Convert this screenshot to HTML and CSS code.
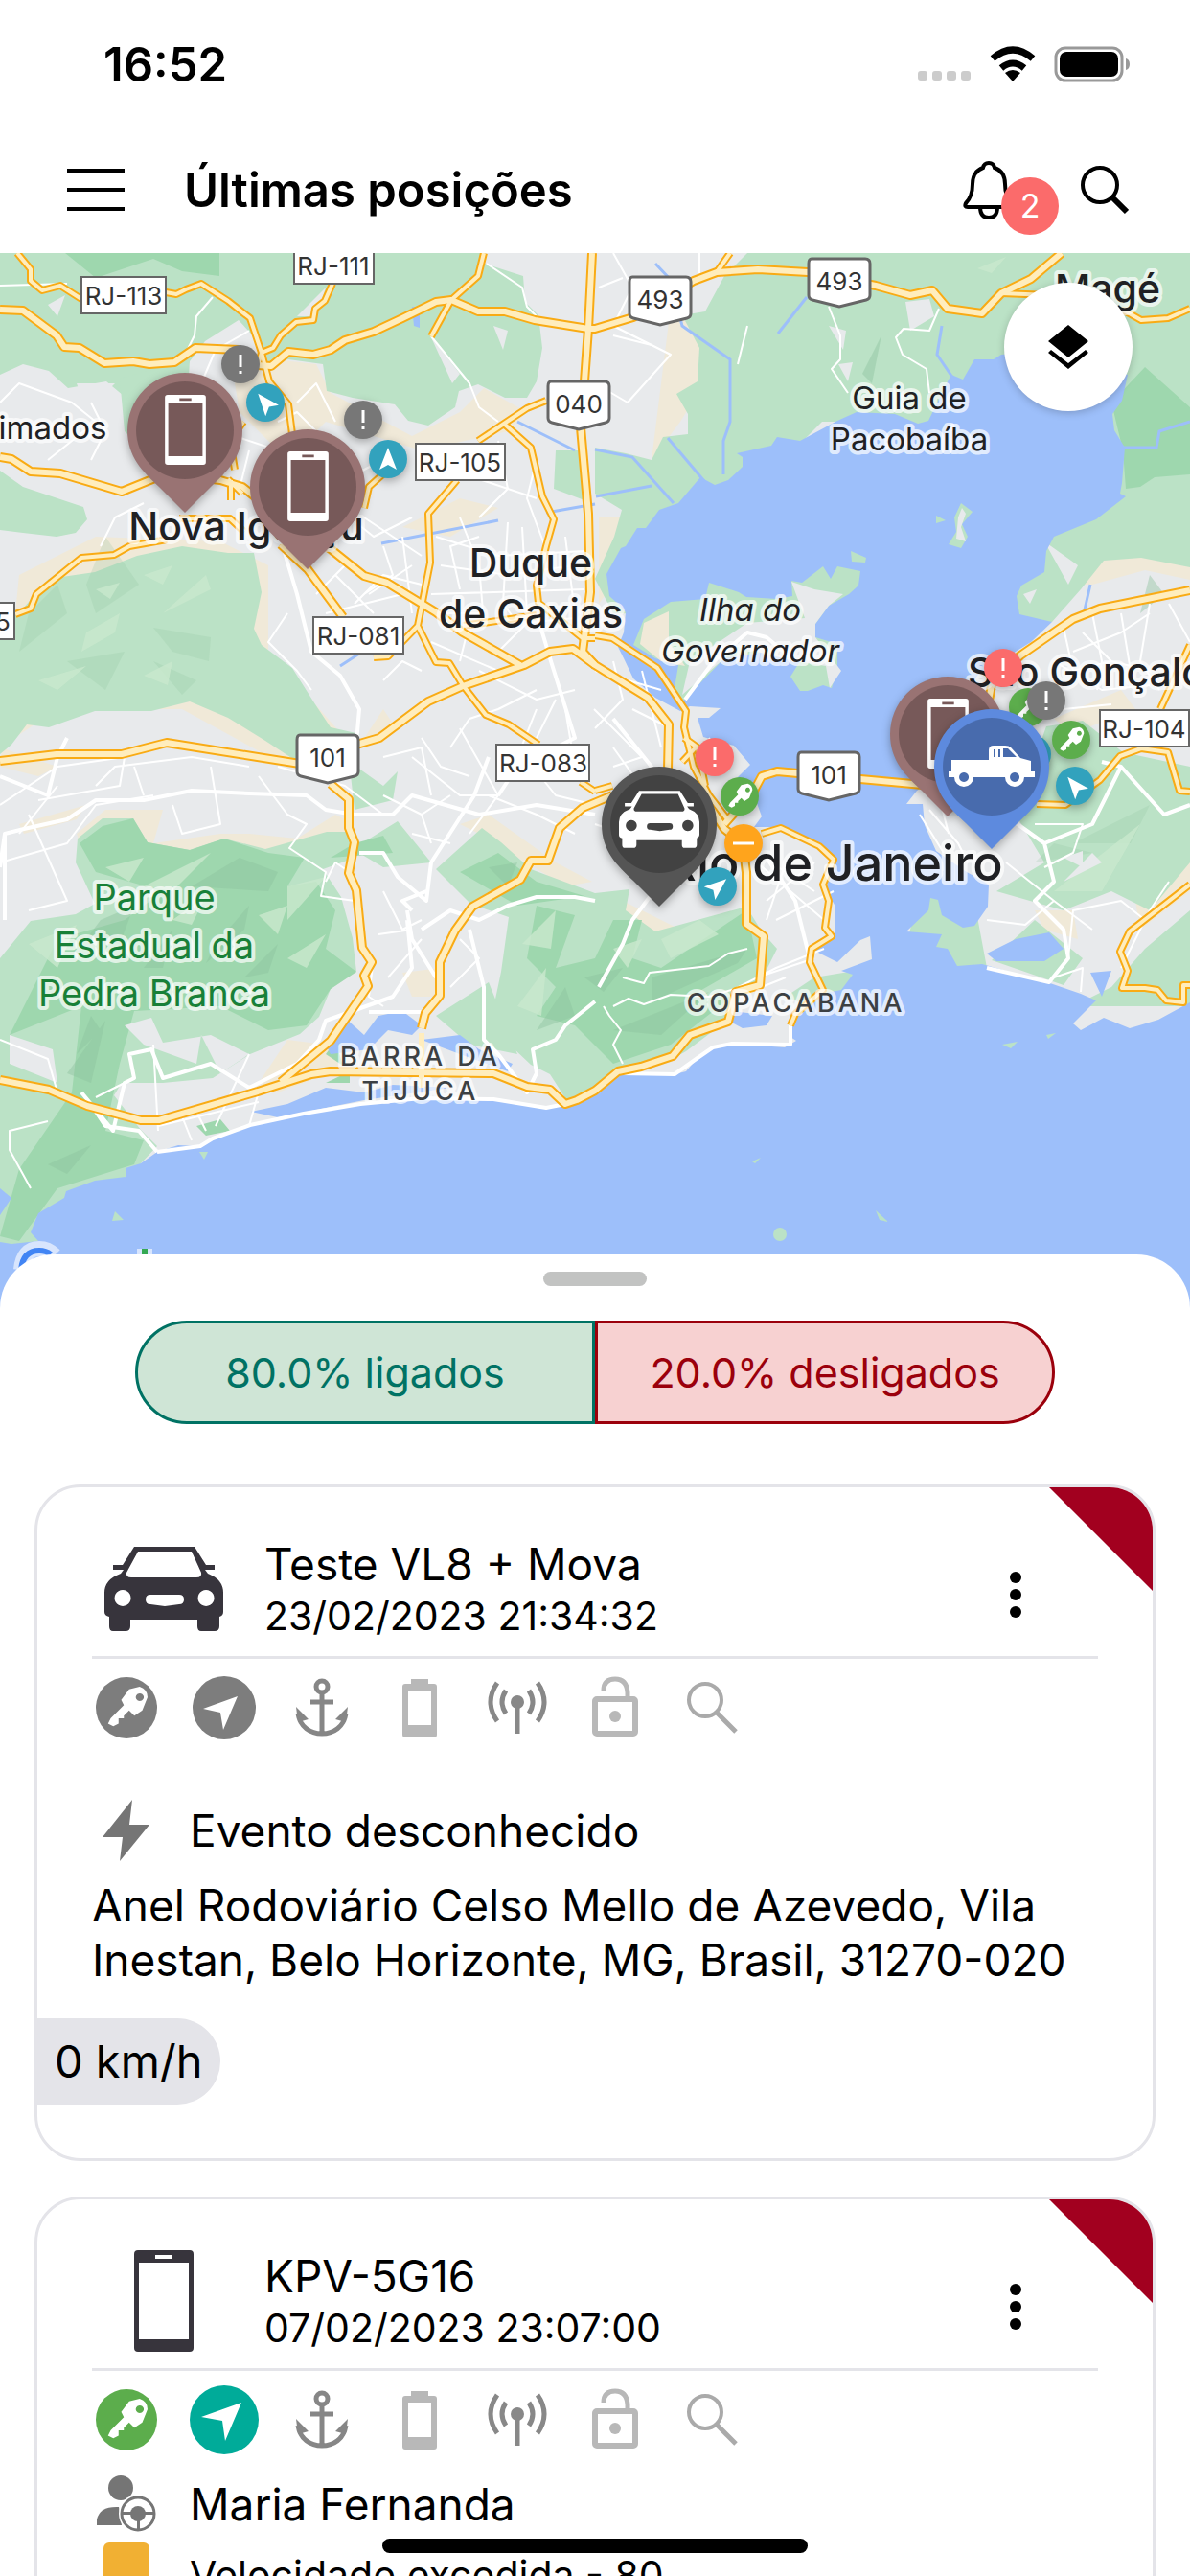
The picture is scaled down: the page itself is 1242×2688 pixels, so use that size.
FILE: index.html
```
<!DOCTYPE html>
<html lang="pt-BR">
<head>
    <meta charset="UTF-8">
    <meta name="viewport" content="width=device-width, initial-scale=1.0">
    <title>Últimas posições</title>
    <link rel="stylesheet" href="styles.css">
</head>
<body>
    <!-- Shared icons -->
    <svg class="sprite" aria-hidden="true">
        <symbol id="car" viewBox="0 0 124 88">
            <path fill="currentColor" fill-rule="evenodd" d="M31 0H94L106 19H115V24H105L108 28Q124 34 124 48V68Q124 72 120 73V83Q120 88 115 88H101Q97 88 97 83V76H27V83Q27 88 22 88H9Q5 88 5 83V73Q0 72 0 68V48Q0 34 17 28L20 24H9V19H19ZM35 5L23 27Q22 32 28 32H96Q102 32 101 27L91 5ZM19 45a8.500 8.500 0 1 0 .1 0ZM106 45a8.500 8.500 0 1 0 .1 0ZM48 50H78Q83 50 83 55 83 60 78 60L63 62 48 60Q43 60 43 55 43 50 48 50Z"/>
        </symbol>
        <symbol id="phone" viewBox="0 0 62 106">
            <path fill="currentColor" fill-rule="evenodd" d="M4 0H58Q62 0 62 4V102Q62 106 58 106H4Q0 106 0 102V4Q0 0 4 0ZM5 13V93H57V13ZM22 5V9H40V5Z"/>
        </symbol>
        <symbol id="truck" viewBox="-45 -22 90 44">
            <path fill="currentColor" fill-rule="evenodd" d="M-42-7H-3V-17Q-3-22 2-22H14Q18-22 20-20L30-9 41-6V5H45V11H34A10 10 0 0 1 14 11H-19A10 10 0 0 1 -39 11H-45V5H-42ZM2-18V-10H4V-18ZM7-18V-10H9V-18ZM12-19V-10H26L17-19ZM-29 6a5 5 0 1 0 .1 0ZM24 6a5 5 0 1 0 .1 0Z"/>
        </symbol>
        <symbol id="key" viewBox="-12 -12 24 24">
            <path fill="#fff" fill-rule="evenodd" d="M1-7L5-8Q8-7 8-4L6 1 3 3 1 1-1 3-1 4-3 4-3 6-5 7-7 6-6 4-1-1-2-3ZM5-5.500a1.500 1.500 0 1 0 .1 0Z"/>
        </symbol>
        <symbol id="anchor" viewBox="0 0 72 72">
            <g fill="none" stroke="#868686" stroke-width="5">
                <circle cx="36" cy="14" r="6"/>
                <path d="M36 20V63M24 30H48M11 42C13 56 24 63 36 63S59 56 61 42"/>
            </g>
            <path fill="#868686" d="M9 35L22 48 11 51ZM63 35L50 48 61 51Z"/>
        </symbol>
        <symbol id="battery" viewBox="0 0 72 72">
            <path fill="#b8b8b8" fill-rule="evenodd" d="M27 6H45V11H51Q54 11 54 14V64Q54 67 51 67H21Q18 67 18 64V14Q18 11 21 11H27ZM24 18V54H48V18Z"/>
        </symbol>
        <symbol id="antenna" viewBox="0 0 72 72">
            <circle cx="36" cy="30" r="7" fill="#888"/>
            <path fill="none" stroke="#888" stroke-width="5" d="M36 30V63M24 18Q16 30 24 42M48 18Q56 30 48 42M15 10Q1 30 15 50M57 10Q71 30 57 50"/>
        </symbol>
        <symbol id="unlock" viewBox="0 0 72 72">
            <rect x="15" y="27" width="42" height="36" rx="2" fill="none" stroke="#b8b8b8" stroke-width="6"/>
            <path d="M24 18Q24 6 36 6T49 20V27" fill="none" stroke="#b8b8b8" stroke-width="5"/>
            <circle cx="36" cy="45" r="6" fill="#b8b8b8"/>
        </symbol>
        <symbol id="lens" viewBox="0 0 72 72">
            <path d="M40 41L60 61" stroke="#aaa" stroke-width="5"/>
            <circle cx="28" cy="28" r="17" fill="none" stroke="#aaa" stroke-width="4"/>
        </symbol>
        <symbol id="alert" viewBox="-20 -20 40 40">
            <path fill="#fff" d="M-1.500-10H1.500V3H-1.500ZM-1.500 7H1.500V10H-1.500Z"/>
        </symbol>
    </svg>

    <div class="app">
        <div class="status-bar">
            <span class="clock">16:52</span>
            <div class="status-icons">
                <svg width="56" height="38" viewBox="0 0 56 38" fill="#ccc"><rect y="26" width="10" height="10" rx="3"/><rect x="15" y="26" width="10" height="10" rx="3"/><rect x="30" y="26" width="10" height="10" rx="3"/><rect x="45" y="26" width="10" height="10" rx="3"/></svg>
                <svg width="48" height="38" viewBox="0 0 48 38">
                    <path d="M24 37L16 28Q24 22 32 28Z"/>
                    <path d="M12 23Q24 13 36 23M3 13Q24-5 45 13" fill="none" stroke="#000" stroke-width="7"/>
                </svg>
                <svg width="80" height="38" viewBox="0 0 80 38">
                    <rect x="2" y="2" width="69" height="34" rx="10" fill="none" stroke="#999" stroke-width="3"/>
                    <rect x="6" y="6" width="61" height="26" rx="7"/>
                    <path d="M75 13Q79 14 79 19T75 25Z" fill="#999"/>
                </svg>
            </div>
        </div>

        <header class="nav-bar">
            <button class="icon-button" aria-label="Menu">
                <svg width="60" height="50" viewBox="0 0 60 50"><path d="M0 5H60M0 25H60M0 45H60" stroke="#000" stroke-width="4"/></svg>
            </button>
            <h1>Últimas posições</h1>
            <button class="icon-button bell" aria-label="Notificações">
                <svg width="54" height="62" viewBox="0 0 54 62" fill="none" stroke="#000" stroke-width="4">
                    <path d="M27 3Q22 3 21 8 10 12 10 25 10 38 3 45 1 49 5 49H49Q53 49 51 45 44 38 44 25 44 12 33 8 32 3 27 3ZM18 49Q18 60 27 60T36 49"/>
                </svg>
                <span class="badge">2</span>
            </button>
            <button class="icon-button" aria-label="Buscar">
                <svg width="50" height="52" viewBox="0 0 50 52" fill="none" stroke="#000"><circle cx="20" cy="21" r="18" stroke-width="4"/><path d="M33 34L48 49" stroke-width="6"/></svg>
            </button>
        </header>

        <main>
            <section class="map-area" aria-label="Mapa">
                <svg class="map" viewBox="0 264 1242 1106">
                    <defs>
                        <g id="highways">
                            <path d="M0 323L24 324 59 350 67 362 83 363 109 379 139 377 156 380 182 378 204 363 249 365 269 381 283 382 301 367 327 370 345 365 360 355 390 346 420 332 455 315 471 313 499 325 527 325 558 334 614 343 621 343 661 331 724 293 748 284 791 281 843 284 914 298 950 308 973 303 989 322 1025 327 1045 306 1076 291 1108 264"/>
                            <path d="M0 477L12 479 32 492 63 494 127 513 174 494 230 501 253 508 300 545 345 573 380 601 404 608 455 639 483 660 543 694"/>
                            <path d="M618 264L614 343 610 398 606 446 614 536 616 618 608 680 621 694 676 728 698 756 697 803"/>
                            <path d="M0 794L59 787 127 787 174 775 313 797 345 790 372 777 396 770 447 732 483 716 547 694 574 680 598 677 621 694"/>
                            <path d="M0 1127L51 1137 91 1154 147 1169 166 1169 269 1139 325 1121 345 1118 515 1120 550 1134 574 1137 590 1152 602 1148 621 1138 645 1118 669 1113 702 1102 720 1080 760 1066 768 1035 793 1028 797 977 779 964 779 910 775 880 756 865 724 815"/>
                            <path d="M345 818L364 834 364 864 370 879 364 911 372 929 378 989 388 1004 380 1018 384 1029 345 1086 293 1129"/>
                            <path d="M440 1073L444 1057 459 1039 459 1004 475 971 493 946 543 918 554 898 572 898 584 864 608 843 639 830"/>
                            <path d="M756 860L787 825 795 810 811 805 898 813 963 819"/>
                            <path d="M1031 736L1036 710 1065 684 1120 646 1148 635 1242 616"/>
                            <path d="M293 568L321 594 358 644"/>
                        </g>
                        <g id="avenues">
                            <path d="M1045 306L1096 308 1175 325 1191 334 1219 332 1242 322"/>
                            <path d="M18 264L32 281 32 293 44 303 63 298 85 312M173 305L184 307 194 302 210 296 238 314 261 332 273 368 281 398 301 422 305 453M347 296L339 314 329 322 327 334 309 336 293 350 285 363 273 368 269 381"/>
                            <path d="M505 264L499 288 471 313 450 351M762 264L748 284"/>
                            <path d="M621 663L639 666 686 697 716 742 714 759 724 800 740 830 760 856"/>
                            <path d="M16 641L32 635 38 620 85 582 119 579 135 570 174 563M187 541L240 541 255 555"/>
                            <path d="M570 418L550 426 499 460M527 443L554 467 566 518 578 542 570 570 560 611 562 629 608 666 621 666M477 501L447 536 449 587 436 653 455 691 469 692 483 715 507 746 531 756 562 777M606 816L621 826M436 653L405 685 390 686M483 653L560 642"/>
                            <path d="M241 501L241 522M245 490L240 460 254 440M380 530L385 508 405 490M238 500L253 515"/>
                            <path d="M795 870L815 864 855 883 870 897 859 923 865 940 861 968 868 977 847 990 845 1004 859 1033 830 1058 825 1070M621 825L639 820"/>
                            <path d="M1082 839L1112 840 1148 814 1169 789 1191 781 1219 785 1231 825 1242 826M1242 673L1211 740M1242 923L1179 972 1169 993 1177 1013 1171 1031 1195 1031 1208 1033 1217 1044 1235 1046 1235 1028 1242 1028"/>
                            <path d="M714 770L728 780 736 820M728 778L712 795"/>
                        </g>
                        <g id="pin">
                            <path d="M0 86L-27 59C-44 43 -60 28 -60 0A60 60 0 1 1 60 0C60 28 44 43 27 59Z"/>
                            <circle r="51" fill="#000" fill-opacity=".22"/>
                        </g>
                        <path id="arrow" d="M0-12L9 11 0 6-9 11Z" fill="#fff"/>
                        <path id="shield" d="M4 0H60Q65 0 65 5V38Q65 42 61 43L33 50 5 43Q1 42 1 38V5Q1 0 4 0Z"/>
                    </defs>

                    <rect class="urban" y="264" width="1242" height="1106"/>

                    <!-- Sand and farmland -->
                    <g class="sand">
                        <path d="M240 370L330 380 345 410 430 455 480 430 505 405 550 430 530 450 440 470 340 440 300 480 250 430ZM20 600L100 560 230 565 280 590 280 680 360 770 300 800 190 740 60 740 0 780 60 800 40 810 0 800ZM420 550L480 520 520 530 470 560ZM377 775L400 740 410 755 400 775Z"/>
                        <path d="M80 870L110 845 170 845 160 880 230 870 260 870 310 875 350 850 370 860 330 890 90 900ZM20 860L90 840 80 855 25 870ZM270 1130L300 1085 340 1090 370 1110 290 1140ZM420 1015L460 1010 455 1040 430 1040ZM640 935L720 975 680 985 660 965ZM480 860L510 850 580 900 618 920 590 925 500 870ZM700 320L735 340 735 400 710 440 680 480ZM625 540L660 540 640 610 625 630Z"/>
                        <path d="M1130 610L1150 580 1195 575 1242 590 1242 605 1195 595 1140 610ZM1100 750L1170 720 1185 740 1120 765ZM1080 950L1120 950 1125 980 1090 970ZM1185 940L1242 900 1242 930 1190 970Z"/>
                    </g>

                    <!-- Vegetation -->
                    <g class="green">
                        <path d="M0 264H507L503 274 546 288 548 315 562 329 566 363 560 398 550 415 527 415 499 401 479 408 475 425 447 444 426 439 412 422 368 415 341 408 337 380 301 375 281 380 273 360 249 334 214 356 198 377 194 387 135 418 111 398 71 405 51 387 24 380 0 391Z"/>
                        <path d="M0 491L24 508 87 529 91 542 79 556 59 560 24 556 0 553ZM125 395L198 375 195 430 150 470 130 450ZM580 470L610 470 610 522 578 510ZM375 770L372 800 400 820 415 805 410 835 370 845 365 800Z"/>
                        <path d="M0 640L24 635 51 604 99 597 143 580 190 570 238 577 265 577 273 618 265 656 273 673 305 697 329 735 345 759 376 766 348 777 309 794 277 773 238 749 198 732 158 742 99 742 51 759 28 756 12 777 0 787Z"/>
                        <path d="M780 264H1242V592L1191 582 1152 585 1128 615 1098 649 640 640 621 604 641 560 649 532 621 515 621 467 653 473 680 480 692 456 718 453 718 432 706 411 728 398 730 363 712 329 736 325 756 288Z"/>
                        <path d="M81 875L107 854 139 854 154 879 198 887 234 875 277 886 341 868 364 868 368 896 337 907 356 936 368 979 372 1014 345 1032 333 1061 313 1079 261 1100 222 1125 170 1130 127 1130 119 1143 147 1179 164 1196 147 1214 131 1228 32 1310H0V1000L32 961 79 954 99 943 79 900ZM368 886L415 857 450 900 400 905Z"/>
                        <path d="M455 907L503 864 523 879 554 907 621 932 657 928 653 950 684 972 779 946 795 972 811 990 791 1030 764 1035 760 1064 716 1097 700 1106 645 1115 594 1152 574 1121 554 1111 535 1093 511 1071 523 1014 531 957 491 943ZM455 1060L510 1025 540 1100 490 1090Z"/>
                        <path d="M1092 758L1130 752 1172 785 1242 800V900L1200 950 1160 930 1110 950 1040 930 1090 900 1060 850ZM1242 950V1050H1120L1160 1030 1195 990ZM820 1040L850 1020 910 1010 870 1060ZM960 930H1015L1030 1010 940 1010ZM1035 1002L1080 960 1130 1000 1110 1028Z"/>
                    </g>
                    <g class="forest">
                        <path d="M68 264H229V288L190 283 160 270 100 290ZM1242 425L1195 383 1160 420 1172 470 1175 510 1190 508 1205 498 1242 495Z"/>
                        <path d="M83 880L107 862 139 854 154 879 198 887 234 875 280 890 318 895 300 925 330 920 350 950 340 990 372 1014 345 1032 320 1070 280 1075 230 1050 140 1055 125 1110 110 1180 150 1190 140 1215 60 1240 20 1295 0 1290 20 1220 75 1140 85 1050 10 1080 60 980 130 960 170 930 100 910ZM370 880L400 872 410 890 345 895Z"/>
                        <path d="M480 910L520 890 560 920 610 935 540 945ZM560 945L600 955 580 1010 621 1000 640 960 670 960 660 1000 690 1010 779 950 790 1000 720 1040 764 1040 700 1090 640 1110 600 1070 560 1060 580 1030 550 1000ZM340 1100L358 1112 350 1086ZM340 1130H365V1118ZM205 1175L230 1168 240 1180 215 1185Z"/>
                    </g>
                    <g class="shade">
                        <path d="M110 560L145 610 100 640 90 610ZM160 655L220 665 218 690 180 680ZM70 690L130 680 110 720ZM30 640L60 610 70 640 20 680ZM160 690L205 710 190 725ZM1120 880L1200 840 1180 880ZM1080 900L1100 880 1140 890Z" opacity=".35"/>
                        <path d="M200 925L250 895 290 910 280 930ZM225 985L260 945 255 970 215 1005ZM105 960L140 945 125 985 90 980ZM255 1020L290 985 280 1015ZM70 1120L110 1065 95 1130ZM560 1075L590 1030 600 1060ZM680 1020L780 990 770 1005 680 1045ZM640 1075L740 1035 690 1080ZM510 905L540 900 530 925ZM900 390L920 350 910 400ZM1190 640L1200 600 1215 620ZM50 1215L95 1195 70 1225ZM80 1100L95 1060 105 1075ZM150 1010L180 970 170 1010ZM610 1020L650 1010 630 1035Z" opacity=".7"/>
                    </g>
                    <g class="light">
                        <path d="M90 660L125 640 120 660 85 680ZM150 600L180 590 170 610ZM40 710L90 695 60 720ZM150 705L180 690 175 715ZM170 640L215 600 220 615ZM100 615L125 608 115 625ZM1020 280L1050 268 1035 285ZM300 925L340 915 300 960ZM110 905L150 895 135 920ZM545 985L580 950 575 990ZM540 1050L570 1010 565 1060ZM690 980L730 960 750 975 700 1000ZM30 985L80 965 60 1010ZM1100 930L1190 860 1150 930ZM640 990L670 980 655 1010ZM150 925L220 890 180 930ZM180 960L215 935 200 965ZM270 955L300 945 290 975ZM300 1000L340 975 320 1010Z"/>
                    </g>
                    <!-- Built-up patches inside the vegetation -->
                    <g class="urban">
                        <path d="M50 318L68 308 60 330ZM515 340L530 345 525 365ZM865 340L883 345 880 365ZM875 380L890 378 885 398ZM945 315L970 312 975 330 950 345ZM450 352L480 390 472 400ZM1060 295L1078 285 1070 300ZM1090 565L1125 590 1115 610ZM1068 620L1082 615 1075 630ZM130 1070L158 1062 170 1088 220 1080 260 1100 230 1120 210 1080 205 1110 150 1090ZM10 1080L55 1095 60 1130 10 1110ZM810 475L828 480 825 482ZM1035 960L1060 940 1070 960ZM874 440L930 430 880 450 840 458 858 440ZM80 400L120 400 90 430ZM340 300L310 330 330 330ZM1110 920L1140 890 1150 900ZM1110 895L1130 888 1130 905Z"/>
                    </g>

                    <!-- Bay and ocean -->
                    <g class="water">
                        <path d="M775 477L775 487 760 501 746 506 731 498 708 525 688 532 674 551 665 551 653 570 648 572 633 599 636 622 645 630 653 639 651 660 645 675 651 687 661 708 684 728 710 742 720 737 752 739 740 749 728 749 734 769 766 778 783 798 767 814 791 818 787 830 795 852 787 863 815 863 843 876 859 883 870 897 862 928 872 946 872 979 850 992 874 1004 898 981 908 977 910 1001 878 1013 890 1017 878 1033 847 1039 831 1057 825 1071 825 1082 831 1086 819 1093 764 1089 744 1093 728 1104 716 1118 704 1121 649 1120 621 1142 594 1153 570 1156 515 1147 440 1146 376 1152 317 1162 261 1174 222 1188 209 1196 186 1195 164 1202 147 1214 131 1219 131 1228 99 1232 69 1243 67 1250 40 1266 32 1286 40 1295 12 1298 0 1296V1370H1242V1046L1209 1064 1179 1073 1152 1062 1128 1075 1120 1068 1144 1044 1128 1037 1096 1026 1025 1006 999 1008 989 990 977 988 983 975 946 972 969 950 971 937 979 939 983 955 1005 968 1017 966 1031 946 1032 923 1009 910 977 888 965 861 963 839 946 839 957 825 977 812 1000 780 1033 731 1011 718 1021 704 1076 670 1098 649 1064 641 1061 622 1066 611 1090 597 1092 575 1100 560 1144 542 1175 518 1169 515 1171 504 1174 467 1163 449 1161 432 1171 418 1177 391 1100 365 1045 370 1037 375 1017 375 1005 396 993 391 989 398 969 439 958 442 934 432 894 430 874 439 835 460 811 456 805 465 769 473Z"/>
                        <path d="M340 1090L360 1062 380 1080 395 1060 420 1055 440 1070 430 1080 405 1075 385 1095 345 1100ZM262 1160L300 1152 340 1135 380 1140 410 1132 470 1135 380 1148 290 1166ZM440 1085L480 1080 500 1095 535 1110 530 1118 480 1100ZM763 1055L806 1060 800 1070 775 1073 762 1066ZM1030 995L1060 980 1095 973 1110 990 1090 1003 1040 1003ZM1138 1015L1160 1013 1150 1040ZM0 1240L12 1250 0 1268ZM430 320H438V342L432 340Z"/>
                        <path d="M697 457L735 502M621 469L660 477 703 525M1166 467H1207L1210 450 1242 440M622 518L680 507M684 275L700 292 712 340 762 375V440L755 460 755 495M842 310L812 348M983 340L978 370 995 395" class="stream"/>
                        <path d="M398 567L520 543M570 535L621 526M540 440L600 470M355 695L375 682M1130 645L1138 610" class="stream"/>
                    </g>

                    <!-- Islands -->
                    <g class="green">
                        <path d="M740 608L771 618 779 623 811 625 827 622 826 606 837 608 859 591 867 604 874 591 898 596 896 611 886 620 865 632 851 651 851 665 874 672 874 697 868 718 859 715 843 721 835 721 825 706 835 690 799 680 756 687 712 732 704 718 708 694 684 687 661 673 672 646 700 628 736 625Z"/>
                        <path d="M888 575L904 582 903 587 889 586ZM1003 525L1015 534 1004 547 1010 560 1003 572 990 568 998 555 996 540ZM977 538L987 543 977 546ZM120 1264L129 1273 117 1274ZM208 1202L217 1202 213 1210ZM914 1263L927 1275 918 1273ZM1046 1090L1062 1087 1055 1094ZM1092 1080L1102 1078 1094 1084ZM568 1209L578 1208ZM785 1212L794 1208 788 1214Z"/>
                        <circle cx="814" cy="1288" r="7"/>
                    </g>
                    <path class="sand" d="M672 650L698 638 698 670 715 695 690 690 668 672Z"/>
                    <path class="urban" d="M826 607L850 615 880 620 865 632 851 651 851 665 878 700 866 718 862 695 830 690 770 675 712 725 720 690 780 650 840 645ZM1004 530L1008 536 1003 550 1008 565 998 562 1000 540Z"/>

                    <!-- Streets -->
                    <g class="street">
                        <path d="M0 298L70 296M222 310L205 330 203 350 193 370M50 480L100 440 75 420 20 400 0 420M95 420L110 450 95 480M260 345L225 365 210 400M450 351L490 400 500 425 520 440M508 275L545 300 550 320 565 335 612 340M640 264L660 300 640 340 700 370 655 420 621 400M730 264V290M770 380L780 340M865 320L877 350V375L868 385 885 410M980 322L970 345 943 343 935 352 942 370 967 385 970 410"/>
                        <path d="M150 525L120 540 105 570M290 440L310 430 330 450 350 470M300 470L360 500 400 480M230 450L290 470 310 490M260 470L250 510M400 570L410 600 380 620M420 560L430 640M455 560L520 580 610 575M460 590L530 600 600 590M480 540L500 590 505 650M530 545L525 630 540 650M450 620L610 615M385 620L430 590M370 630L400 600 440 610M500 500L560 520M520 460L530 510 500 540M490 650L480 690M520 680L550 650 600 645M300 640L280 670 310 700 325 720M400 710L420 690 440 700M500 700L560 730 600 720M520 740L560 720M470 780L490 750 520 740M440 770L460 800 490 810M590 740L600 800M400 790L440 780 450 830M560 770L580 730"/>
                        <path d="M0 840L60 800 130 790 125 820 40 835M30 850L70 940 30 950M0 900L70 880 100 840 160 830M220 800L230 860 190 870 180 840M270 810L300 850 320 860 302 885 340 910 335 935 370 940M290 800L360 820 400 850M340 920L350 900 365 910M100 820L120 800 200 790 260 800M430 870L470 880M400 930L420 970 440 960M395 975L430 970M405 1020L440 980M390 1000L385 1040 400 1050M470 1030L500 1000 480 980"/>
                        <path d="M480 760L520 830 490 870M430 790L480 830 520 830M540 780L580 830 621 840M510 830L560 850 600 870M560 740L540 790M620 740L670 790 640 800M640 690L650 730 621 760M660 740L700 760M670 700L690 780M621 700L690 720M621 860L680 880 740 900M640 880L720 910M640 780L690 850M790 900L860 960M800 940L850 900M810 960L870 930M790 890L850 930M820 900L800 960M740 770L760 800"/>
                        <path d="M160 1090L165 1180M260 1100L225 1175M270 1139L260 1175M190 1165L200 1190M205 1160L215 1180M165 1175L270 1150M130 1130L100 1145M0 1085L50 1105 60 1140M50 1170L10 1180 10 1200 32 1240M650 1020L672 1026 678 1015 740 1008 760 995 780 990M640 1050L656 1042 672 1048 700 1038 740 1040 780 1028M650 1110L640 1090 648 1075 636 1060 630 1050M765 1033L810 1010 860 990M790 1020L850 1000M770 1040L820 1020"/>
                        <path d="M1110 655L1120 700 1160 690 1200 700M1120 680L1170 660 1200 640M1140 640L1150 690 1145 720M1170 640L1180 700M1200 630L1190 690 1210 720M1100 690L1150 720 1200 715M1130 660L1160 690M1220 630L1242 670M1080 720L1110 740 1160 735M960 850L985 890M970 845L1000 880 1010 900M980 830L990 870M1030 960L1070 965 1100 940 1050 900M1080 860L1130 860 1120 890 1090 905M1100 940L1140 970M1115 1000L1120 950 1170 940 1195 960M1100 1020L1130 1010 1128 1035M1170 1010L1200 950 1220 920"/>
                        <path d="M340 640L420 620M350 600L390 640M360 590L330 620M480 615L470 570 500 560M545 550L550 640M460 640L500 640M450 670L520 700M310 560L340 520 390 560 430 540M380 540L440 580M310 420L330 400 350 440M560 480L550 520 580 600M590 560L600 640M60 820L20 870M140 800L150 830M400 830L440 850 470 830M440 850L450 880M640 350L680 360M625 300L650 290"/>
                    </g>
                    <g class="street wide">
                        <path d="M295 570L310 620 325 680 355 705 375 740 372 775M0 905L5 870 25 865 70 855 100 835 150 835 200 825 260 828 320 830 340 845 370 850 410 850 430 830 500 850 560 840 621 850M0 810L50 830 60 790 70 770M5 960V870M375 890L400 890 415 915 445 940 450 900 495 830 510 790M430 950L420 940 445 930M425 950L430 980 455 1020M425 960L430 1010 410 1040 340 1065 333 1085 310 1110 260 1135 220 1110 170 1125 158 1095 135 1100 140 1125 130 1130 118 1180 85 1140M490 970L505 1030 505 1085 520 1100 550 1140 560 1120 556 1095 580 1085 590 1070 621 1045M385 1056H440M440 970L470 950 500 960 530 945 560 936 600 936 621 940"/>
                        <path d="M740 860L690 920 660 960 650 985 625 1030M649 1120L704 1121 728 1104 744 1093 764 1089 825 1090V1070M800 895L830 940 845 1000M640 750L680 800 690 820M560 640L575 690 600 770 540 800 520 830M1020 830L1090 880 1140 860 1170 800 1150 795M1090 880L1100 920 1080 940 1110 970 1115 1000 1095 1025 1030 1010M1170 800L1215 850 1242 840M715 730L745 690 780 660 800 665 830 690M164 1202L209 1196 222 1188 261 1174 317 1162 376 1152 440 1146 515 1147 570 1156 600 1150M164 1202L145 1180 110 1175 100 1160"/>
                    </g>

                    <use href="#avenues" class="road-edge thin"/>
                    <use href="#highways" class="road-edge"/>
                    <use href="#avenues" class="road-fill thin"/>
                    <use href="#highways" class="road-fill"/>
                    <path class="road-fill" d="M440 1078V1135"/>

                    <!-- Road numbers -->
                    <g class="plate">
                        <rect x="85" y="289" width="88" height="38"/><text x="129" y="318">RJ-113</text>
                        <rect x="307" y="258" width="83" height="38"/><text x="348" y="287">RJ-111</text>
                        <rect x="434" y="463" width="93" height="38"/><text x="480" y="492">RJ-105</text>
                        <rect x="327" y="644" width="94" height="38"/><text x="374" y="673">RJ-081</text>
                        <rect x="518" y="777" width="97" height="38"/><text x="567" y="806">RJ-083</text>
                        <rect x="1148" y="741" width="93" height="38"/><text x="1194" y="770">RJ-104</text>
                        <rect x="-20" y="629" width="35" height="38"/><text x="3" y="658">5</text>
                    </g>
                    <g class="shield">
                        <use href="#shield" x="571" y="398"/><text x="604" y="431">040</text>
                        <use href="#shield" x="656" y="289"/><text x="689" y="322">493</text>
                        <use href="#shield" x="843" y="270"/><text x="876" y="303">493</text>
                        <use href="#shield" x="309" y="767"/><text x="342" y="800">101</text>
                        <use href="#shield" x="832" y="785"/><text x="865" y="818">101</text>
                    </g>

                    <!-- Place names -->
                    <g class="place">
                        <text x="55" y="458">imados</text>
                        <text x="949" y="427">Guia de</text>
                        <text x="949" y="470">Pacobaíba</text>
                        <g class="isle">
                            <text x="783" y="648">Ilha do</text>
                            <text x="783" y="691">Governador</text>
                        </g>
                    </g>
                    <g class="place city">
                        <text x="257" y="564">Nova Iguaçu</text>
                        <text x="554" y="602">Duque</text>
                        <text x="554" y="655">de Caxias</text>
                        <text x="1156" y="316">Magé</text>
                        <text x="1134" y="716">São Gonçalo</text>
                        <text x="870" y="919" class="capital">Rio de Janeiro</text>
                    </g>
                    <g class="place park">
                        <text x="161" y="950">Parque</text>
                        <text x="161" y="1000">Estadual da</text>
                        <text x="161" y="1050">Pedra Branca</text>
                    </g>
                    <g class="place district">
                        <text x="439" y="1112">BARRA DA</text>
                        <text x="439" y="1148">TIJUCA</text>
                        <text x="831" y="1056">COPACABANA</text>
                    </g>

                    <!-- Map provider logo, mostly under the sheet -->
                    <path class="logo-halo" d="M22 1325Q24 1303 41 1303 50 1303 57 1310M151 1303V1330"/>
                    <path d="M22 1325Q24 1305 41 1305 48 1305 53 1309" fill="none" stroke="#4285f4" stroke-width="6"/>
                    <path d="M151 1303V1330" stroke="#34a853" stroke-width="6"/>

                    <!-- Vehicles -->
                    <g class="vehicle">
                        <use href="#pin" x="193" y="449" fill="#997373"/>
                        <use href="#phone" x="172" y="412" width="43" height="73" color="#fff"/>
                        <circle class="gray" cx="251" cy="380" r="20"/><use href="#alert" x="231" y="360" width="40" height="40"/>
                        <circle class="cyan" cx="277" cy="420" r="20"/><use href="#arrow" transform="translate(277 420) rotate(-40)"/>
                    </g>
                    <g class="vehicle">
                        <use href="#pin" x="321" y="508" fill="#997373"/>
                        <use href="#phone" x="300" y="471" width="43" height="73" color="#fff"/>
                        <circle class="gray" cx="379" cy="438" r="20"/><use href="#alert" x="359" y="418" width="40" height="40"/>
                        <circle class="cyan" cx="405" cy="479" r="20"/><use href="#arrow" transform="translate(405 479)"/>
                    </g>
                    <g class="vehicle">
                        <use href="#pin" x="688" y="860" fill="#555"/>
                        <use href="#car" x="646" y="825" width="84" height="60" color="#fff"/>
                        <circle class="red" cx="746" cy="790" r="20"/><use href="#alert" x="726" y="770" width="40" height="40"/>
                        <circle class="lime" cx="772" cy="831" r="20"/><use href="#key" x="752" y="811" width="40" height="40"/>
                        <circle cx="776" cy="880" r="20" fill="#ffa41c"/><path d="M765 880H787" stroke="#fff" stroke-width="3"/>
                        <circle class="cyan" cx="749" cy="925" r="20"/><use href="#arrow" transform="translate(749 925) rotate(50)"/>
                    </g>
                    <g class="vehicle">
                        <use href="#pin" x="989" y="766" fill="#997373"/>
                        <use href="#phone" x="968" y="729" width="43" height="73" color="#fff"/>
                        <circle class="red" cx="1047" cy="697" r="20"/><use href="#alert" x="1027" y="677" width="40" height="40"/>
                        <circle class="lime" cx="1073" cy="738" r="20"/><use href="#key" x="1053" y="718" width="40" height="40"/>
                        <circle class="cyan" cx="1077" cy="787" r="20"/>
                    </g>
                    <g class="vehicle">
                        <use href="#pin" x="1035" y="800" fill="#5d8ade"/>
                        <use href="#truck" x="990" y="778" width="90" height="44" color="#fff"/>
                        <circle class="gray" cx="1092" cy="731" r="20"/><use href="#alert" x="1072" y="711" width="40" height="40"/>
                        <circle class="lime" cx="1118" cy="772" r="20"/><use href="#key" x="1098" y="752" width="40" height="40"/>
                        <circle class="cyan" cx="1122" cy="820" r="20"/><use href="#arrow" transform="translate(1122 820) rotate(-40)"/>
                    </g>
                </svg>

                <button class="layers" aria-label="Camadas">
                    <svg width="42" height="46" viewBox="0 0 42 46"><path d="M21 0L42 17 21 34 0 17ZM0 29L3 26 21 40 39 26 42 29 21 46Z"/></svg>
                </button>
            </section>

            <section class="sheet">
                <div class="handle"></div>

                <div class="summary">
                    <button class="on">80.0% ligados</button>
                    <button class="off">20.0% desligados</button>
                </div>

                <article class="card">
                    <div class="flag"></div>
                    <div class="card-header">
                        <div class="card-icon"><svg width="124" height="88"><use href="#car"/></svg></div>
                        <div class="card-title">
                            <h2>Teste VL8 + Mova</h2>
                            <time>23/02/2023 21:34:32</time>
                        </div>
                        <button class="more" aria-label="Opções">
                            <svg width="12" height="50" viewBox="0 0 12 50"><circle cx="6" cy="7" r="6"/><circle cx="6" cy="25" r="6"/><circle cx="6" cy="43" r="6"/></svg>
                        </button>
                    </div>
                    <div class="indicators">
                        <svg viewBox="0 0 72 72"><circle cx="36" cy="36" r="32" fill="#7d7d7d"/><use href="#key" x="3" y="3" width="66" height="66"/></svg>
                        <svg viewBox="0 0 72 72"><circle cx="36" cy="36" r="33" fill="#7d7d7d"/><path d="M50 24L14 37 32 41 35 59Z" fill="#fff"/></svg>
                        <svg><use href="#anchor"/></svg>
                        <svg><use href="#battery"/></svg>
                        <svg><use href="#antenna"/></svg>
                        <svg><use href="#unlock"/></svg>
                        <svg><use href="#lens"/></svg>
                    </div>
                    <div class="info event">
                        <svg viewBox="0 0 72 72"><path d="M42 4L11 43H32L29 68 60 30H39Z" fill="#757575"/></svg>
                        <span>Evento desconhecido</span>
                    </div>
                    <p class="address">Anel Rodoviário Celso Mello de Azevedo, Vila Inestan, Belo Horizonte, MG, Brasil, 31270-020</p>
                    <span class="speed">0 km/h</span>
                </article>

                <article class="card">
                    <div class="flag"></div>
                    <div class="card-header">
                        <div class="card-icon"><svg width="62" height="106"><use href="#phone"/></svg></div>
                        <div class="card-title">
                            <h2>KPV-5G16</h2>
                            <time>07/02/2023 23:07:00</time>
                        </div>
                        <button class="more" aria-label="Opções">
                            <svg width="12" height="50" viewBox="0 0 12 50"><circle cx="6" cy="7" r="6"/><circle cx="6" cy="25" r="6"/><circle cx="6" cy="43" r="6"/></svg>
                        </button>
                    </div>
                    <div class="indicators">
                        <svg viewBox="0 0 72 72"><circle cx="36" cy="36" r="32" fill="#5cad4c"/><use href="#key" x="3" y="3" width="66" height="66"/></svg>
                        <svg viewBox="0 0 72 72"><circle cx="36" cy="36" r="36" fill="#00ab99"/><path d="M54 18L12 33 34 37 37 58Z" fill="#fff"/></svg>
                        <svg><use href="#anchor"/></svg>
                        <svg><use href="#battery"/></svg>
                        <svg><use href="#antenna"/></svg>
                        <svg><use href="#unlock"/></svg>
                        <svg><use href="#lens"/></svg>
                    </div>
                    <div class="info">
                        <svg viewBox="0 0 72 72">
                            <g fill="#757575"><circle cx="30" cy="19" r="13"/><path d="M5 58V52Q8 38 28 39L31 58Z"/></g>
                            <circle cx="48" cy="46" r="20" fill="#fff"/>
                            <circle cx="48" cy="46" r="17" fill="none" stroke="#757575" stroke-width="3"/>
                            <path d="M31 44H65V47H31ZM47 46H50V64H47Z" fill="#757575"/><circle cx="48" cy="46" r="8" fill="#757575"/>
                        </svg>
                        <span>Maria Fernanda</span>
                    </div>
                    <div class="info alert-row">
                        <svg viewBox="0 0 72 72"><rect x="12" y="2" width="48" height="68" rx="6" fill="#f1b033"/></svg>
                        <span>Velocidade excedida - 80</span>
                    </div>
                </article>
            </section>
        </main>
        <div class="home-indicator"></div>
    </div>
</body>
</html>
```
FILE: styles.css
```
* {
    box-sizing: border-box;
}

body {
    margin: 0;
    background-color: #fff;
    color: #000;
    font-family: Inter, "Liberation Sans", sans-serif;
    font-size: 46px;
}

button {
    padding: 0;
    border: none;
    background: none;
    color: inherit;
    font: inherit;
    cursor: pointer;
}

svg {
    display: block;
}

.sprite {
    position: absolute;
    width: 0;
    height: 0;
}

.app {
    height: 100vh;
    overflow: hidden;
}

/* Top bars */
.status-bar {
    display: flex;
    align-items: center;
    justify-content: space-between;
    height: 134px;
    padding: 0 62px 0 108px;
}

.clock {
    font-size: 49px;
    font-weight: 600;
}

.status-icons {
    display: flex;
    gap: 19px;
}

.nav-bar {
    display: flex;
    align-items: center;
    height: 130px;
    padding: 0 64px 2px 70px;
}

.nav-bar h1 {
    flex: 1;
    margin: 0 0 0 62px;
    font-size: 49px;
    font-weight: 600;
}

.bell {
    position: relative;
    margin-right: 69px;
}

.badge {
    position: absolute;
    left: 40px;
    top: 18px;
    width: 60px;
    height: 60px;
    border-radius: 50%;
    background-color: #fb6b6b;
    color: #fff;
    font-size: 34px;
    line-height: 60px;
}

/* Map */
.map-area {
    position: relative;
}

.map {
    width: 100%;
    height: auto;
}

.urban { fill: #e8eaec; }
.sand { fill: #f0e9d8; }
.green { fill: #bbe2c6; }
.forest { fill: #9ed7ae; }
.shade { fill: #8dc19d; fill-opacity: 0.6; }
.light { fill: #c9e8cd; fill-opacity: 0.8; }
.water { fill: #9dbffa; }

.stream {
    fill: none;
    stroke: #9dbffa;
    stroke-width: 3;
}

.street {
    fill: none;
    stroke: #fff;
    stroke-width: 2;
    stroke-linejoin: round;
}

.street.wide {
    stroke-width: 4;
}

.road-edge,
.road-fill {
    fill: none;
    stroke: #f9ab14;
    stroke-width: 10;
    stroke-linejoin: round;
}

.road-edge.thin {
    stroke-width: 8;
}

.road-fill {
    stroke: #ffedbd;
    stroke-width: 6;
}

.road-fill.thin {
    stroke-width: 4;
}

.plate,
.shield {
    fill: #fff;
    stroke: #666;
    stroke-width: 2;
    font-size: 26px;
    text-anchor: middle;
}

.shield {
    stroke-width: 3;
}

.plate text,
.shield text {
    fill: #333;
    stroke: none;
}

.place {
    fill: #202124;
    stroke: rgba(255, 255, 255, 0.7);
    stroke-width: 8;
    stroke-linejoin: round;
    paint-order: stroke;
    font-size: 33px;
    text-anchor: middle;
}

.isle {
    font-style: italic;
}

.city {
    font-size: 41px;
    font-weight: 500;
}

.capital {
    font-size: 52px;
}

.park {
    fill: #188038;
    font-size: 38px;
}

.district {
    fill: #3c4043;
    font-size: 27px;
    font-weight: 500;
    letter-spacing: 4px;
}

.logo-halo {
    fill: none;
    stroke: #d8e5fd;
    stroke-width: 16;
}

.vehicle {
    filter: drop-shadow(0 3px 5px rgba(0, 0, 0, 0.3));
}

.gray { fill: #777; }
.cyan { fill: #32a2bd; }
.red { fill: #fb6b6b; }
.lime { fill: #5cad4c; }

.layers {
    position: absolute;
    top: 31px;
    right: 60px;
    display: flex;
    align-items: center;
    justify-content: center;
    width: 134px;
    height: 134px;
    border-radius: 50%;
    background-color: #fff;
    box-shadow: 0 2px 8px rgba(0, 0, 0, 0.2);
}

/* Bottom sheet */
.sheet {
    position: relative;
    margin-top: -61px;
    padding: 18px 36px 0;
    border-radius: 56px 56px 0 0;
    background-color: #fff;
}

.handle {
    width: 108px;
    height: 15px;
    margin: 0 auto 36px;
    border-radius: 8px;
    background-color: #c2c3c2;
}

.summary {
    display: flex;
    margin: 0 105px 63px;
    font-size: 43px;
}

.summary button {
    flex: 1;
    height: 108px;
    border: 3px solid;
}

.summary .on {
    border-radius: 54px 0 0 54px;
    background-color: #cfe5d6;
    color: #007264;
}

.summary .off {
    border-radius: 0 54px 54px 0;
    background-color: #f7d1d1;
    color: #9b000c;
}

.card {
    position: relative;
    margin-bottom: 37px;
    padding: 0 57px 56px;
    border: 3px solid #e4e4e9;
    border-radius: 48px;
    overflow: hidden;
}

.flag {
    position: absolute;
    top: 0;
    right: 0;
    width: 108px;
    height: 108px;
    background-color: #a2001f;
    clip-path: polygon(0 0, 100% 0, 100% 100%);
}

.card-header {
    display: flex;
    align-items: center;
    height: 179px;
    padding-top: 36px;
    border-bottom: 3px solid #e4e4e9;
}

.card-icon {
    display: flex;
    justify-content: center;
    width: 150px;
    margin-right: 30px;
    color: #37343c;
}

.card-title {
    flex: 1;
}

.card-title h2 {
    margin: 0;
    font-size: 46px;
    font-weight: 400;
    line-height: 56px;
}

.card-title time {
    display: block;
    font-size: 41px;
    line-height: 52px;
}

.more {
    margin: 12px 80px 0 0;
}

.indicators {
    display: flex;
    align-items: center;
    gap: 30px;
    height: 102px;
}

.indicators svg,
.info svg {
    width: 72px;
    height: 72px;
}

.info {
    display: flex;
    align-items: center;
    gap: 30px;
    height: 74px;
}

.event {
    margin-top: 40px;
}

.alert-row {
    font-size: 41px;
}

.address {
    margin: 13px 0 32px;
    line-height: 57px;
}

.speed {
    display: block;
    width: max-content;
    margin-left: -57px;
    padding: 0 18px;
    border-radius: 0 45px 45px 0;
    background-color: #e4e4e9;
    font-size: 47px;
    line-height: 90px;
}

.home-indicator {
    position: fixed;
    bottom: 24px;
    left: 50%;
    width: 444px;
    height: 15px;
    margin-left: -222px;
    border-radius: 8px;
    background-color: #000;
}
```
